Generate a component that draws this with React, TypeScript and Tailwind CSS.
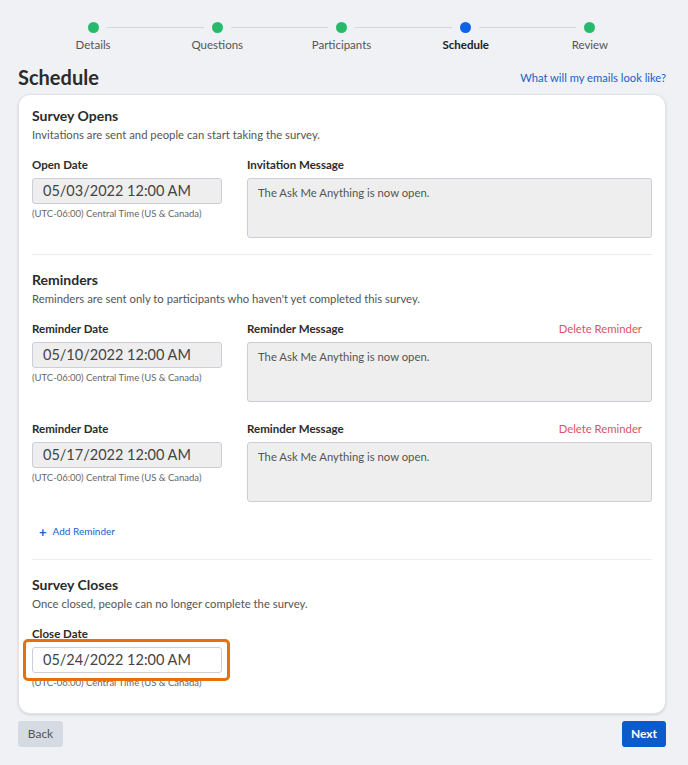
import React from "react";

const font = { fontFamily: "Lato, 'Open Sans', 'Liberation Sans', sans-serif" };

function Stepper() {
  const steps = ["Details", "Questions", "Participants", "Schedule", "Review"];
  return (
    <div className="ml-[31px] w-[621px] pt-[22px]">
      <div className="flex items-center px-[57px]">
        {steps.map((s, i) => (
          <React.Fragment key={s}>
            <div className={`h-[11px] w-[11px] shrink-0 rounded-full ${s === "Schedule" ? "bg-[#0f62e6]" : "bg-[#27ba6c]"}`} />
            {i < steps.length - 1 && <div className="mx-[8px] h-px flex-1 bg-[#d3d6dc]" />}
          </React.Fragment>
        ))}
      </div>
      <div className="mt-[5px] grid grid-cols-5 text-center text-[11.5px] leading-[14px]">
        {steps.map((s) => (
          <div key={s} className={s === "Schedule" ? "font-bold text-[#222]" : "text-[#555]"}>{s}</div>
        ))}
      </div>
    </div>
  );
}

function DateField({ value, disabled = true, highlight = false }: { value: string; disabled?: boolean; highlight?: boolean }) {
  return (
    <div>
      <div className="relative w-fit">
        <div className={`flex h-[26px] w-[190px] items-center rounded-[3px] border border-[#c9ced8] pl-[10px] text-[14.5px] text-[#444] ${disabled ? "bg-[#eeeeee]" : "bg-white"}`}>
          {value}
        </div>
        {highlight && <div className="absolute -left-[9px] -right-[8px] -top-[8px] -bottom-[8px] rounded-[5px] border-[3px] border-[#e7700d]" />}
      </div>
      <div className="mt-[3px] text-[9.5px] leading-[14px] text-[#666]">(UTC-06:00) Central Time (US &amp; Canada)</div>
    </div>
  );
}

function MessageBox() {
  return (
    <div className="h-[60px] w-full rounded-[3px] border border-[#c9ced8] bg-[#eeeeee] px-[10px] pt-[6px] text-[11.3px] text-[#555]">
      The Ask Me Anything is now open.
    </div>
  );
}

function Row({ dateLabel, date, msgLabel, del = false, disabled = true }: { dateLabel: string; date: string; msgLabel: string; del?: boolean; disabled?: boolean }) {
  return (
    <div className="flex gap-[25px]">
      <div className="w-[190px] shrink-0">
        <div className="mb-[6px] text-[11.5px] font-bold leading-[14px] text-[#2b2b2b]">{dateLabel}</div>
        <DateField value={date} disabled={disabled} />
      </div>
      <div className="flex-1">
        <div className="mb-[6px] flex justify-between pr-[10px] text-[11.5px] leading-[14px]">
          <span className="font-bold text-[#2b2b2b]">{msgLabel}</span>
          {del && <span className="text-[11.3px] text-[#d9536a]">Delete Reminder</span>}
        </div>
        <MessageBox />
      </div>
    </div>
  );
}

function SectionHead({ title, desc }: { title: string; desc: string }) {
  return (
    <div className="mb-[16px]">
      <div className="text-[14px] font-bold leading-[18px] text-[#2b2b2b]">{title}</div>
      <div className="mt-[3px] text-[11.3px] leading-[14px] text-[#555]">{desc}</div>
    </div>
  );
}

export default function App() {
  return (
    <div className="min-h-[765px] w-[688px] bg-[#f0f1f4]" style={font}>
      <Stepper />
      <div className="ml-[18px] mr-[22px] mt-[13px] flex items-end justify-between">
        <h1 className="text-[20px] font-bold leading-[24px] text-[#2b2b2b]">Schedule</h1>
        <a className="pb-[2px] text-[11.2px] text-[#1a5fc9]">What will my emails look like?</a>
      </div>
      <div className="ml-[18px] mr-[22px] mt-[5px] h-[620px] rounded-[12px] border border-[#e1e3e8] bg-white px-[13px] pt-[12px] shadow-sm">
        <SectionHead title="Survey Opens" desc="Invitations are sent and people can start taking the survey." />
        <Row dateLabel="Open Date" date="05/03/2022 12:00 AM" msgLabel="Invitation Message" />
        <div className="my-[16px] h-px bg-[#ececef]" />
        <SectionHead title="Reminders" desc="Reminders are sent only to participants who haven't yet completed this survey." />
        <Row dateLabel="Reminder Date" date="05/10/2022 12:00 AM" msgLabel="Reminder Message" del />
        <div className="h-[20px]" />
        <Row dateLabel="Reminder Date" date="05/17/2022 12:00 AM" msgLabel="Reminder Message" del />
        <div className="mt-[22px] flex items-center gap-[6px] pl-[7px] text-[10px] text-[#1a5fc9]">
          <span className="text-[13px] font-bold leading-[10px]">+</span>
          <span>Add Reminder</span>
        </div>
        <div className="mb-[16px] mt-[20px] h-px bg-[#ececef]" />
        <SectionHead title="Survey Closes" desc="Once closed, people can no longer complete the survey." />
        <div className="mb-[6px] text-[11.5px] font-bold leading-[14px] text-[#2b2b2b]">Close Date</div>
        <DateField value="05/24/2022 12:00 AM" disabled={false} highlight />
      </div>
      <div className="ml-[18px] mr-[22px] mt-[7px] flex justify-between">
        <button className="h-[26px] w-[45px] rounded-[3px] bg-[#d6dbe3] text-[12px] text-[#555]">Back</button>
        <button className="h-[26px] w-[44px] rounded-[3px] bg-[#0b5bcb] text-[12px] font-bold text-white">Next</button>
      </div>
    </div>
  );
}
